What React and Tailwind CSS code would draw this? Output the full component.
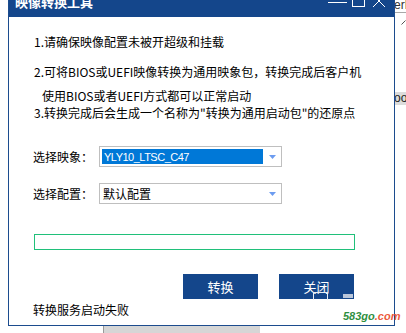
import React from 'react';

const cjk = "font-['Noto_Sans_CJK_SC',sans-serif]";

function TitleBar() {
  return (
    <div className="h-[25px] bg-[#14468b] flex items-start">
      <div className="pl-[6px] pt-[3px] text-[13px] leading-[13px] font-bold text-white whitespace-nowrap">
        映像转换工具
      </div>
      {/* window controls, top part is cropped off in the shot */}
      <svg className="ml-auto shrink-0" width="70" height="25" viewBox="0 0 70 25" fill="none" stroke="#ffffff" strokeWidth="1">
        <line x1="4" y1="10.5" x2="23" y2="10.5" />
        <rect x="28.5" y="3.5" width="12" height="11" />
        <line x1="49" y1="3" x2="61" y2="15" />
        <line x1="61" y1="3" x2="49" y2="15" />
      </svg>
    </div>
  );
}

function Arrow() {
  return (
    <svg className="ml-auto mr-[3px] shrink-0" width="7" height="4" viewBox="0 0 7 4">
      <path d="M0 0 H7 L3.5 4 Z" fill="#6c9cf0" />
    </svg>
  );
}

function SelectRow({ label, children }) {
  return (
    <div className="flex items-center h-[21px]">
      <div className="w-[66px] text-[12px] leading-[16px] whitespace-nowrap">{label}</div>
      <div className="w-[183px] h-[21px] border border-[#bfbfbf] bg-white p-[2px] flex items-center">
        {children}
        <Arrow />
      </div>
    </div>
  );
}

function Dialog() {
  return (
    <div className="w-[387px] shrink-0 border-l border-r border-b border-[#1c4c8e] bg-white flex flex-col">
      <TitleBar />
      <div className="h-[308px] pl-[24px] flex flex-col text-[12px] leading-[16px]">
        <div className="mt-[17px] pl-[1px] whitespace-nowrap">1.请确保映像配置未被开超级和挂载</div>
        <div className="mt-[14px] pl-[1px] whitespace-nowrap">2.可将BIOS或UEFI映像转换为通用映象包，转换完成后客户机</div>
        <div className="mt-[8px] pl-[9px] whitespace-nowrap">使用BIOS或者UEFI方式都可以正常启动</div>
        <div className="mt-[1px] pl-[1px] whitespace-nowrap">3.转换完成后会生成一个名称为"转换为通用启动包"的还原点</div>

        <div className="mt-[25px]">
          <SelectRow label="选择映象：">
            <div className="w-[161px] h-full bg-[#0078d7] text-white flex items-center pl-[2px] font-['Liberation_Sans',sans-serif] text-[11px] tracking-[-0.5px] whitespace-nowrap">
              YLY10_LTSC_C47
            </div>
          </SelectRow>
        </div>
        <div className="mt-[16px]">
          <SelectRow label="选择配置：">
            <div className="pl-[1px] text-[12px] whitespace-nowrap">默认配置</div>
          </SelectRow>
        </div>

        <div className="mt-[30px] ml-[1px] w-[321px] h-[16px] border border-[#20c07a]" />

        <div className="mt-[24px] ml-[150px] flex gap-[21px]">
          <button className="w-[75px] h-[25px] bg-[#14468b] text-white text-[13px] leading-[25px]">转换</button>
          <button className="w-[75px] h-[25px] bg-[#14468b] text-white text-[13px] leading-[25px]">关闭</button>
        </div>

        <div className="mt-[3px] whitespace-nowrap">转换服务启动失败</div>
      </div>
    </div>
  );
}

function SideStrip() {
  return (
    <div className="w-[11px] shrink-0 pt-[8px] flex flex-col overflow-hidden">
      <div className="h-[12px] text-[12px] leading-[10px] text-[#333] font-['Liberation_Sans',sans-serif] whitespace-nowrap -ml-[1px]">erL</div>
      <div className="h-px bg-[#a8a8a8]" />
      <svg className="mt-[7px] ml-[6px]" width="5" height="5" viewBox="0 0 5 5">
        <line x1="0.5" y1="4.5" x2="4.5" y2="0.5" stroke="#555" strokeWidth="1" />
      </svg>
      <div className="mt-[67px] h-[13px] bg-[#dcdcdc] text-[12px] leading-[13px] text-[#222] font-['Liberation_Sans',sans-serif] whitespace-nowrap -ml-[1px] pl-0">oo</div>
    </div>
  );
}

export default function App() {
  return (
    <div className={`relative w-[406px] h-[333px] overflow-hidden bg-white text-black ${cjk}`}>
      <div className="flex -mt-[8px]">
        <div className="w-[8px] shrink-0" />
        <Dialog />
        <SideStrip />
      </div>
      <div className="flex">
        <div className="ml-[103px] w-[157px] h-[8px] bg-[#d6d6d6] border-l border-[#9a9a9a]" />
      </div>

      {/* screen capture leftovers over the close button */}
      <div className="absolute left-[313px] top-[292px] w-[15px] h-[8px] border-l border-r border-t border-[#e8eef5]" />
      <div className="absolute left-[343px] top-[294px] w-[10px] h-[4px] bg-[#b9c6da]" />

      {/* watermark */}
      <div className="absolute left-[343px] top-[310px] text-[11px] leading-[13px] font-bold italic font-['Liberation_Sans',sans-serif] whitespace-nowrap">
        <span className="text-[#2f8f3f]">583go</span>
        <span className="text-[#ec5a3c]">.com</span>
      </div>
    </div>
  );
}
